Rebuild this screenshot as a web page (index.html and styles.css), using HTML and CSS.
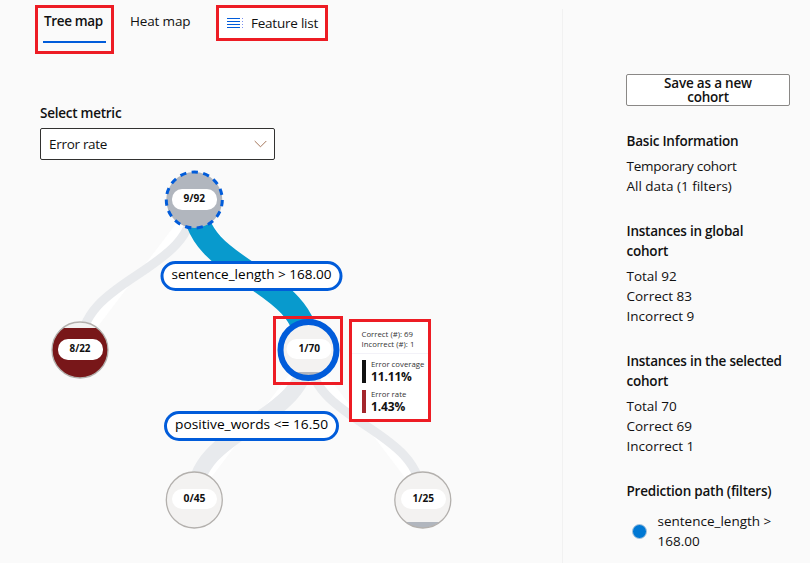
FILE: index.html
```html
<!DOCTYPE html>
<html lang="en">
<head>
<meta charset="utf-8">
<title>Error analysis</title>
<link rel="stylesheet" href="styles.css">
</head>
<body>
<div class="page">
  <main class="main">
    <nav class="tabs">
      <div class="tab-highlight"><a class="tab active"><span>Tree map</span></a></div>
      <a class="tab heat"><span>Heat map</span></a>
      <div class="feature">
        <svg class="list-icon" width="16" height="12" viewBox="0 0 16 12"><path d="M0 1.5H13M0 4.5H13M0 7.5H13M0 10.5H13" stroke="#015cda"/><path d="M15.5 1V11" stroke="#7a8ff0" stroke-dasharray="1 2"/></svg>
        <span>Feature list</span>
      </div>
    </nav>
    <section class="metric">
      <label class="strong">Select metric</label>
      <div class="select"><span>Error rate</span>
        <svg width="13" height="8" viewBox="0 0 13 8"><path d="M.7 1L6.5 6.8L12.3 1" fill="none" stroke="#a4765a"/></svg>
      </div>
    </section>
    <svg class="tree" width="562" height="403" viewBox="0 160 562 403">
      <defs>
        <clipPath id="c1"><circle cx="80" cy="350" r="28"/></clipPath>
        <clipPath id="c2"><circle cx="308.5" cy="350" r="27"/></clipPath>
        <clipPath id="c3"><circle cx="422.5" cy="500" r="28"/></clipPath>
      </defs>
      <g class="links">
        <path d="M194 200C194 275 80 275 80 350" stroke-width="9"/>
        <path class="on" d="M194 200C194 275 308 275 308 350" stroke-width="24"/>
        <path d="M308 350C308 425 194 425 194 500" stroke-width="16"/>
        <path d="M308 350C308 425 422 425 422 500" stroke-width="9"/>
      </g>
      <circle cx="194.3" cy="200" r="28" fill="#b1b6be" stroke="#015cda" stroke-width="3" stroke-dasharray="6.3 5.43"/>
      <circle cx="80" cy="350" r="28" fill="#f3f2f1"/>
      <rect x="50" y="328" width="60" height="52" fill="#781719" clip-path="url(#c1)"/>
      <circle class="ring" cx="80" cy="350" r="28"/>
      <circle cx="308.5" cy="350" r="28" fill="#f3f2f1"/>
      <rect x="278" y="372" width="60" height="8" fill="#b1b6be" clip-path="url(#c2)"/>
      <circle cx="308.5" cy="350" r="28" fill="none" stroke="#015cda" stroke-width="6"/>
      <circle cx="194.3" cy="500" r="28" fill="#f3f2f1"/>
      <circle class="ring" cx="194.3" cy="500" r="28"/>
      <circle cx="422.8" cy="500" r="28" fill="#f3f2f1"/>
      <rect x="392" y="522" width="60" height="8" fill="#b1b6be" clip-path="url(#c3)"/>
      <circle class="ring" cx="422.8" cy="500" r="28"/>
      <g fill="#fff">
        <rect x="172" y="189" width="45" height="21" rx="10"/>
        <rect x="58" y="339" width="45" height="21" rx="10"/>
        <rect x="286.500" y="339" width="45" height="20" rx="10"/>
        <rect x="172" y="489" width="45" height="20" rx="10"/>
        <rect x="401" y="489" width="45" height="20" rx="10"/>
      </g>
      <g class="count">
        <text x="183.500" y="202" textLength="21.500" lengthAdjust="spacingAndGlyphs">9/92</text>
        <text x="69.500" y="352" textLength="21" lengthAdjust="spacingAndGlyphs">8/22</text>
        <text x="298.500" y="352" textLength="21.500" lengthAdjust="spacingAndGlyphs">1/70</text>
        <text x="183.500" y="502" textLength="22" lengthAdjust="spacingAndGlyphs">0/45</text>
        <text x="412.500" y="502" textLength="21.500" lengthAdjust="spacingAndGlyphs">1/25</text>
      </g>
      <g class="pill">
        <rect x="162" y="262.500" width="179" height="27" rx="13.500"/>
        <rect x="165.500" y="412.500" width="172" height="27" rx="13.500"/>
      </g>
      <text x="171.500" y="279" textLength="160" lengthAdjust="spacingAndGlyphs">sentence_length &gt; 168.00</text>
      <text x="175" y="429" textLength="153" lengthAdjust="spacingAndGlyphs">positive_words &lt;= 16.50</text>
      <rect x="274.500" y="317.500" width="67" height="66" fill="none" stroke="#ed1c24" stroke-width="3"/>
    </svg>
    <aside class="tip">
      <div class="tip-head">Correct (#): 69<br>Incorrect (#): 1</div>
      <div class="stat"><i class="bar black"></i><div><small>Error coverage</small><b>11.11%</b></div></div>
      <div class="stat"><i class="bar red"></i><div><small>Error rate</small><b>1.43%</b></div></div>
    </aside>
  </main>
  <aside class="side">
    <button class="save"><span>Save as a new cohort</span></button>
    <section class="info"><h2>Basic Information</h2><p class="snug">Temporary cohort</p><p>All data (1 filters)</p></section>
    <section class="info"><h2>Instances in global cohort</h2><p>Total 92</p><p>Correct 83</p><p>Incorrect 9</p></section>
    <section class="info"><h2>Instances in the selected cohort</h2><p>Total 70</p><p>Correct 69</p><p>Incorrect 1</p></section>
    <section class="info"><h2>Prediction path (filters)</h2>
      <div class="filter"><i class="dot"></i><p>sentence_length &gt; 168.00</p></div>
    </section>
  </aside>
</div>
</body>
</html>
```
FILE: styles.css
```css
* { box-sizing: border-box; }
body { margin: 0; background: #fafafa; color: #111; font: 13.5px/20px "Open Sans", "Noto Sans", sans-serif; overflow: hidden; }
.page { display: flex; width: 810px; height: 563px; }
.main { width: 562px; flex: none; position: relative; display: flex; flex-direction: column; }
.tabs { display: flex; align-items: flex-start; height: 54px; padding-left: 35px; }
.tab-highlight { margin-top: 5px; width: 79px; height: 49px; border: 3px solid #ed1c24; padding: 3px 5px 0; }
.tab { display: block; white-space: nowrap; }
.tab.active { height: 32px; border-bottom: 2px solid #015cda; font-weight: 600; letter-spacing: -0.35px; padding-left: 1px; }
.tab.heat { margin: 11px 0 0 16px; width: 60px; letter-spacing: -0.15px; }
.feature { margin: 5px 0 0 26px; width: 112px; height: 36px; border: 3px solid #ed1c24; background: #fff; display: flex; align-items: center; padding-left: 8px; gap: 8px; white-space: nowrap; letter-spacing: -0.23px; }
.list-icon { flex: none; }
.strong { font-weight: 600; letter-spacing: -0.25px; }
.metric { height: 106px; padding: 49px 0 0 40px; display: flex; flex-direction: column; gap: 5px; }
.select { width: 235px; height: 32px; border: 1px solid #323130; border-radius: 2px; background: #fff; display: flex; justify-content: space-between; align-items: center; padding: 0 7px 0 8px; letter-spacing: -0.3px; }
.tree { display: block; flex: none; }
.links path { fill: #fff; stroke: #e8eaed; }
.links .on { stroke: #089acd; }
.ring { fill: none; stroke: #b3b0ad; stroke-width: 1.3; }
.count { font-size: 9.8px; font-weight: 700; fill: #111; }
.pill rect { fill: #fff; stroke: #015cda; stroke-width: 3; }
.tip { position: absolute; left: 349px; top: 319px; width: 82px; height: 103px; border: 3px solid #ed1c24; background: #fff; color: #333; font-size: 7.8px; line-height: 10px; white-space: nowrap; }
.tip-head { height: 32px; padding: 7px 0 0 9.5px; border-bottom: 1px solid #f3f2f8; }
.stat { display: flex; gap: 5px; margin: 6px 0 7px 10px; height: 23px; }
.bar { width: 4px; height: 23px; }
.black { background: #111; }
.red { background: #a4262c; }
.stat small { display: block; font-size: 7.8px; line-height: 9px; }
.stat b { display: block; font-size: 12px; line-height: 15px; color: #111; letter-spacing: -0.15px; }
.side { margin-top: 9px; height: 554px; flex: 1; border-left: 1px solid #f1f1f1; padding: 65px 0 0 63px; }
.save { display: block; width: 164px; height: 32px; border: 1px solid #8a8886; border-radius: 2px; background: #fff; color: #111; font: 600 13.5px/14px "Open Sans", sans-serif; padding: 0 30px; letter-spacing: -0.2px; }
.info { margin-top: 25px; width: 159px; padding-left: .5px; }
.info p { margin: 0; }
.info .snug { letter-spacing: -0.25px; }
.info h2 { margin: 0 0 5px; font-size: 13.5px; line-height: 20px; font-weight: 600; letter-spacing: -0.22px; }
.filter { display: flex; align-items: center; margin-top: 10px; }
.dot { width: 15px; height: 15px; border-radius: 50%; background: #0078d4; border: 1px solid #a9c4dc; margin: 0 11px 0 5px; flex: none; }
```
